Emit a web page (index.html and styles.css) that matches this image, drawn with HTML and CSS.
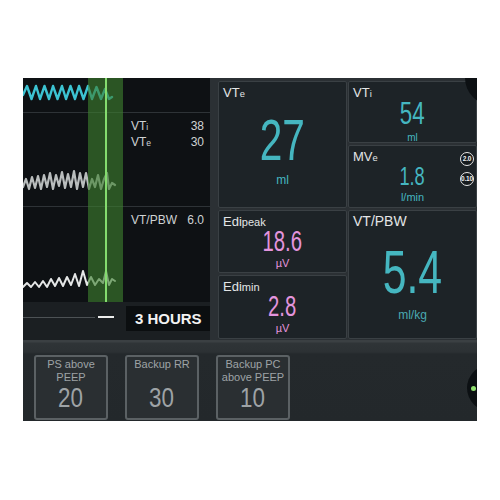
FILE: index.html
```html
<!DOCTYPE html>
<html>
<head>
<meta charset="utf-8">
<link rel="stylesheet" href="styles.css">
</head>
<body>
<div class="screen">
  <div class="top">
    <div class="wave-panel">
      <div class="rows">
        <div class="row r1">
          <svg class="wave" width="108" height="34" viewBox="0 0 108 34">
            <polyline class="w-teal" points="0,17 4,8 8.5,21 13,8 17,21 21.5,8 26,21 30,8 34.5,21 39,8 43,21 47.5,8 52,21 56,8 60.5,21 65,8 69,21 73.5,9 78,21 82,11 86,21 89,19"/>
          </svg>
          <div class="readouts"></div>
        </div>
        <div class="row r2">
          <svg class="wave" width="108" height="93" viewBox="0 0 108 93">
            <polyline class="w-gray" points="0,74 3,66 6,76 9,64 12,75 15,63 18,76 21,62 24,74 27,60 30,76 33,62 36,73 39,59 42,75 45,61 48,74 51,58 54,76 57,60 60,74 63,60 66,76 69,66 72,74 75,62 78,76 81,66 84,60 86,76 89,70 92,72"/>
          </svg>
          <div class="readouts">
            <div class="ro"><span>VT<span class="sub">i</span></span><span>38</span></div>
            <div class="ro"><span>VT<span class="sub">e</span></span><span>30</span></div>
          </div>
        </div>
        <div class="row r3">
          <svg class="wave" width="108" height="95" viewBox="0 0 108 95">
            <polyline class="w-white" points="0,80 4,76 8,80 12,75 16,80 20,74 24,80 28,72 32,79 36,71 40,79 44,70 48,78 52,67 56,79 60,64 64,78 68,70 72,78 76,72 80,76 83,64 86,78 89,72 92,74"/>
          </svg>
          <div class="readouts">
            <div class="ro"><span>VT/PBW</span><span>6.0</span></div>
          </div>
        </div>
        <div class="cursor-band"><div class="cursor-line"></div></div>
      </div>
      <div class="timebar">
        <div class="track"></div>
        <div class="dash"></div>
        <div class="hours">3 HOURS</div>
      </div>
    </div>

    <div class="cards">
      <div class="card vte">
        <div class="label">VT<span class="sub">e</span></div>
        <div class="num big teal">27</div>
        <div class="unit teal u-big">ml</div>
      </div>
      <div class="card vti">
        <div class="label">VT<span class="sub">i</span></div>
        <div class="num mid teal">54</div>
        <div class="unit teal u-small">ml</div>
      </div>
      <div class="card mve">
        <div class="label">MV<span class="sub">e</span></div>
        <div class="num mid2 teal">1.8</div>
        <div class="unit teal u-small2">l/min</div>
        <div class="badge b1">2.0</div>
        <div class="badge b2">0.10</div>
      </div>
      <div class="card edipeak">
        <div class="label">Edi<span class="sub2">peak</span></div>
        <div class="num edi pink">18.6</div>
        <div class="unit pink u-edi">µV</div>
      </div>
      <div class="card edimin">
        <div class="label">Edi<span class="sub2">min</span></div>
        <div class="num edi pink">2.8</div>
        <div class="unit pink u-edi">µV</div>
      </div>
      <div class="card vtpbw">
        <div class="label lbl-lg">VT/PBW</div>
        <div class="num big2 teal">5.4</div>
        <div class="unit teal2 u-big2">ml/kg</div>
      </div>
    </div>
  </div>

  <div class="bottom">
    <div class="btn">
      <div class="btn-label">PS above<br>PEEP</div>
      <div class="btn-num">20</div>
    </div>
    <div class="btn">
      <div class="btn-label">Backup RR</div>
      <div class="btn-num">30</div>
    </div>
    <div class="btn">
      <div class="btn-label">Backup PC<br>above PEEP</div>
      <div class="btn-num">10</div>
    </div>
  </div>

  <div class="knob knob-top"></div>
  <div class="knob knob-bottom"><span class="knob-dot"></span></div>
</div>
</body>
</html>
```

FILE: styles.css
```css
html, body {
  margin: 0;
  padding: 0;
  background: #ffffff;
}
body {
  font-family: "Liberation Sans", Arial, sans-serif;
}
.screen {
  position: relative;
  margin: 78px 0 0 23px;
  width: 454px;
  height: 343px;
  background: #2b3034;
  overflow: hidden;
  display: flex;
  flex-direction: column;
}
.top {
  display: flex;
  height: 262px;
  gap: 8px;
}
.wave-panel {
  width: 187px;
  display: flex;
  flex-direction: column;
  background: #0e1114;
}
.rows {
  position: relative;
  height: 224px;
  display: flex;
  flex-direction: column;
}
.row {
  display: grid;
  grid-template-columns: 108px 1fr;
}
.r1 { height: 34px; border-bottom: 1px solid #2e3337; }
.r2 { height: 93px; border-bottom: 1px solid #2e3337; }
.r3 { height: 95px; }
.wave { display: block; }
.wave polyline {
  fill: none;
  stroke-width: 2.4;
  stroke-linejoin: round;
  stroke-linecap: round;
}
.w-teal { stroke: #3cc3d2; }
.w-gray { stroke: #b9bdbd; stroke-width: 2.2 !important; }
.w-white { stroke: #e4e6e6; stroke-width: 2 !important; }
.readouts {
  padding: 6px 6px 0 0;
  color: #cfd3d4;
  font-size: 12px;
  line-height: 15px;
}
.ro {
  display: flex;
  justify-content: space-between;
}
.sub {
  font-size: 0.72em;
}
.sub2 {
  font-size: 0.85em;
}
.cursor-band {
  position: absolute;
  left: 65px;
  top: 0;
  width: 35px;
  height: 224px;
  background: rgba(62, 128, 46, 0.62);
}
.cursor-line {
  position: absolute;
  left: 17px;
  top: 0;
  width: 2px;
  height: 224px;
  background: #84dc6e;
}
.timebar {
  height: 38px;
  background: #1b1f22;
  display: flex;
  align-items: flex-start;
}
.track {
  width: 72px;
  height: 1px;
  margin-top: 15px;
  background: #4d5255;
}
.dash {
  width: 17px;
  height: 2px;
  margin: 14px 0 0 3px;
  background: #ececec;
}
.hours {
  margin: 4px 0 0 12px;
  width: 84px;
  height: 25px;
  background: #0b0e10;
  color: #f2f2f2;
  font-weight: bold;
  font-size: 15px;
  line-height: 25px;
  text-align: center;
}
.cards {
  margin-top: 3px;
  width: 259px;
  display: grid;
  grid-template-columns: 129px 129px;
  grid-template-rows: 62px 63px 63px 64px;
  column-gap: 1px;
  row-gap: 2px;
  align-self: flex-start;
}
.card {
  position: relative;
  box-sizing: border-box;
  background: #1d2327;
  border: 1px solid #3a4044;
  border-radius: 2px;
  display: flex;
  flex-direction: column;
  align-items: center;
}
.vte { grid-column: 1; grid-row: 1 / 3; }
.vti { grid-column: 2; grid-row: 1; }
.mve { grid-column: 2; grid-row: 2; }
.edipeak { grid-column: 1; grid-row: 3; }
.edimin { grid-column: 1; grid-row: 4; }
.vtpbw { grid-column: 2; grid-row: 3 / 5; }
.label {
  align-self: stretch;
  padding: 3px 0 0 4px;
  color: #e3e5e6;
  font-size: 13px;
  line-height: 15px;
}
.lbl-lg { font-size: 14px; }
.num {
  transform: scaleX(0.7);
  line-height: 1;
}
.teal { color: #45b6c0; }
.teal2 { color: #4aa9b2; }
.pink { color: #e394dd; }
.big { font-size: 58px; margin-top: 9px; }
.big2 { font-size: 61px; margin-top: 13px; }
.mid { font-size: 31px; line-height: 26px; margin-top: -1px; transform: scaleX(0.72); }
.mid2 { font-size: 26px; margin-top: -3px; }
.edi { font-size: 29px; margin-top: -3px; }
.unit { line-height: 1; }
.u-big { font-size: 12px; margin-top: 5px; }
.u-big2 { font-size: 12px; margin-top: 6px; }
.u-small { font-size: 10px; line-height: 10px; margin-top: 6px; }
.u-small2 { font-size: 11px; margin-top: 3px; }
.u-edi { font-size: 11px; margin-top: 2px; }
.badge {
  position: absolute;
  right: 2px;
  width: 14px;
  height: 14px;
  box-sizing: border-box;
  border: 1px solid #e8e8e8;
  border-radius: 50%;
  background: #151a1d;
  color: #f0f0f0;
  font-size: 6.5px;
  font-weight: bold;
  line-height: 12px;
  text-align: center;
  letter-spacing: -0.2px;
}
.b1 { top: 6px; }
.b2 { top: 26px; }
.bottom {
  flex: 1;
  background: linear-gradient(#3b4043 0, #3b4043 2px, #2f3437 3px, #2c3134 12px, #24292c 14px, #23282b 100%);
  display: flex;
  gap: 17px;
  padding: 15px 0 0 11px;
}
.btn {
  width: 74px;
  height: 65px;
  box-sizing: border-box;
  border: 2px solid #5b6164;
  border-radius: 3px;
  background: #2a2f32;
  color: #9ea3a6;
  display: flex;
  flex-direction: column;
  align-items: center;
  text-align: center;
}
.btn-label {
  height: 26px;
  padding-top: 1px;
  font-size: 11px;
  line-height: 13px;
}
.btn-num {
  margin-top: 2px;
  font-size: 28px;
  line-height: 24px;
  transform: scaleX(0.8);
}
.knob {
  position: absolute;
  border-radius: 50%;
  background: #0c1013;
}
.knob-top {
  left: 442px;
  top: -27px;
  width: 54px;
  height: 54px;
}
.knob-bottom {
  left: 444px;
  top: 287px;
  width: 46px;
  height: 46px;
}
.knob-dot {
  position: absolute;
  left: 4px;
  top: 21px;
  width: 5px;
  height: 5px;
  border-radius: 50%;
  background: #8fe070;
}
```
